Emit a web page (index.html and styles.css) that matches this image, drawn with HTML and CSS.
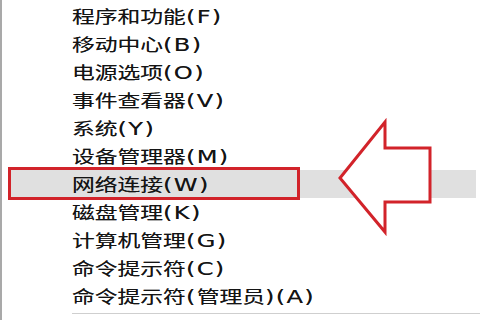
FILE: index.html
```html
<!DOCTYPE html>
<html lang="zh-CN">
<head>
<meta charset="utf-8">
<title>Win+X 菜单</title>
<link rel="stylesheet" href="styles.css">
</head>
<body>
<div class="screen">
  <div class="menu">
    <ul class="items">
      <li class="item"><span class="label">程序和功能<span class="lat">(F)</span></span></li>
      <li class="item"><span class="label">移动中心<span class="lat">(B)</span></span></li>
      <li class="item"><span class="label">电源选项<span class="lat">(O)</span></span></li>
      <li class="item"><span class="label">事件查看器<span class="lat">(V)</span></span></li>
      <li class="item"><span class="label">系统<span class="lat">(Y)</span></span></li>
      <li class="item"><span class="label">设备管理器<span class="lat">(M)</span></span></li>
      <li class="item item-active"><span class="label">网络连接<span class="lat">(W)</span></span></li>
      <li class="item"><span class="label">磁盘管理<span class="lat">(K)</span></span></li>
      <li class="item"><span class="label">计算机管理<span class="lat">(G)</span></span></li>
      <li class="item"><span class="label">命令提示符<span class="lat">(C)</span></span></li>
      <li class="item"><span class="label">命令提示符<span class="lat">(</span>管理员<span class="lat">)(A)</span></span></li>
    </ul>
    <div class="sep"></div>
  </div>
  <div class="callout-box"></div>
  <svg class="arrow" width="480" height="320" viewBox="0 0 480 320">
    <polygon points="340,178 385,122 385,148 430,148 430,202 385,202 385,232" fill="#ffffff" stroke="#d2232a" stroke-width="3" stroke-linejoin="miter"/>
  </svg>
</div>
</body>
</html>
```

FILE: styles.css
```css
html, body {
  margin: 0;
  padding: 0;
  background: #ffffff;
}

.screen {
  position: relative;
  width: 480px;
  height: 320px;
  overflow: hidden;
  background: #ffffff;
  font-family: "Noto Sans CJK SC", "Noto Sans", sans-serif;
  color: #141414;
}

.menu {
  height: 320px;
  border-left: 2px solid #a9a9a9;
  padding-top: 2px;
  box-sizing: border-box;
}

.items {
  list-style: none;
  margin: 0;
  padding: 0;
}

.item {
  height: 28px;
  display: flex;
  align-items: center;
  padding-left: 64px;
  margin: 0 4px 0 6px;
  font-size: 17px;
  white-space: nowrap;
}

.item-active {
  background: #e0e0e0;
}

.label {
  display: inline-block;
  transform: scaleX(1.34);
  transform-origin: left center;
  line-height: 28px;
  text-shadow: 0 0 0.4px rgba(0, 0, 0, 0.6);
}

.lat {
  font-family: "DejaVu Sans", sans-serif;
  font-size: 18px;
  letter-spacing: 1px;
}

.sep {
  height: 1px;
  background: #cfcfcf;
  margin: 3px 0 0 70px;
}

.callout-box {
  position: absolute;
  left: 8px;
  top: 167px;
  width: 292px;
  height: 33px;
  box-sizing: border-box;
  border: 3px solid #d2232a;
}

.arrow {
  position: absolute;
  left: 0;
  top: 0;
}
```
